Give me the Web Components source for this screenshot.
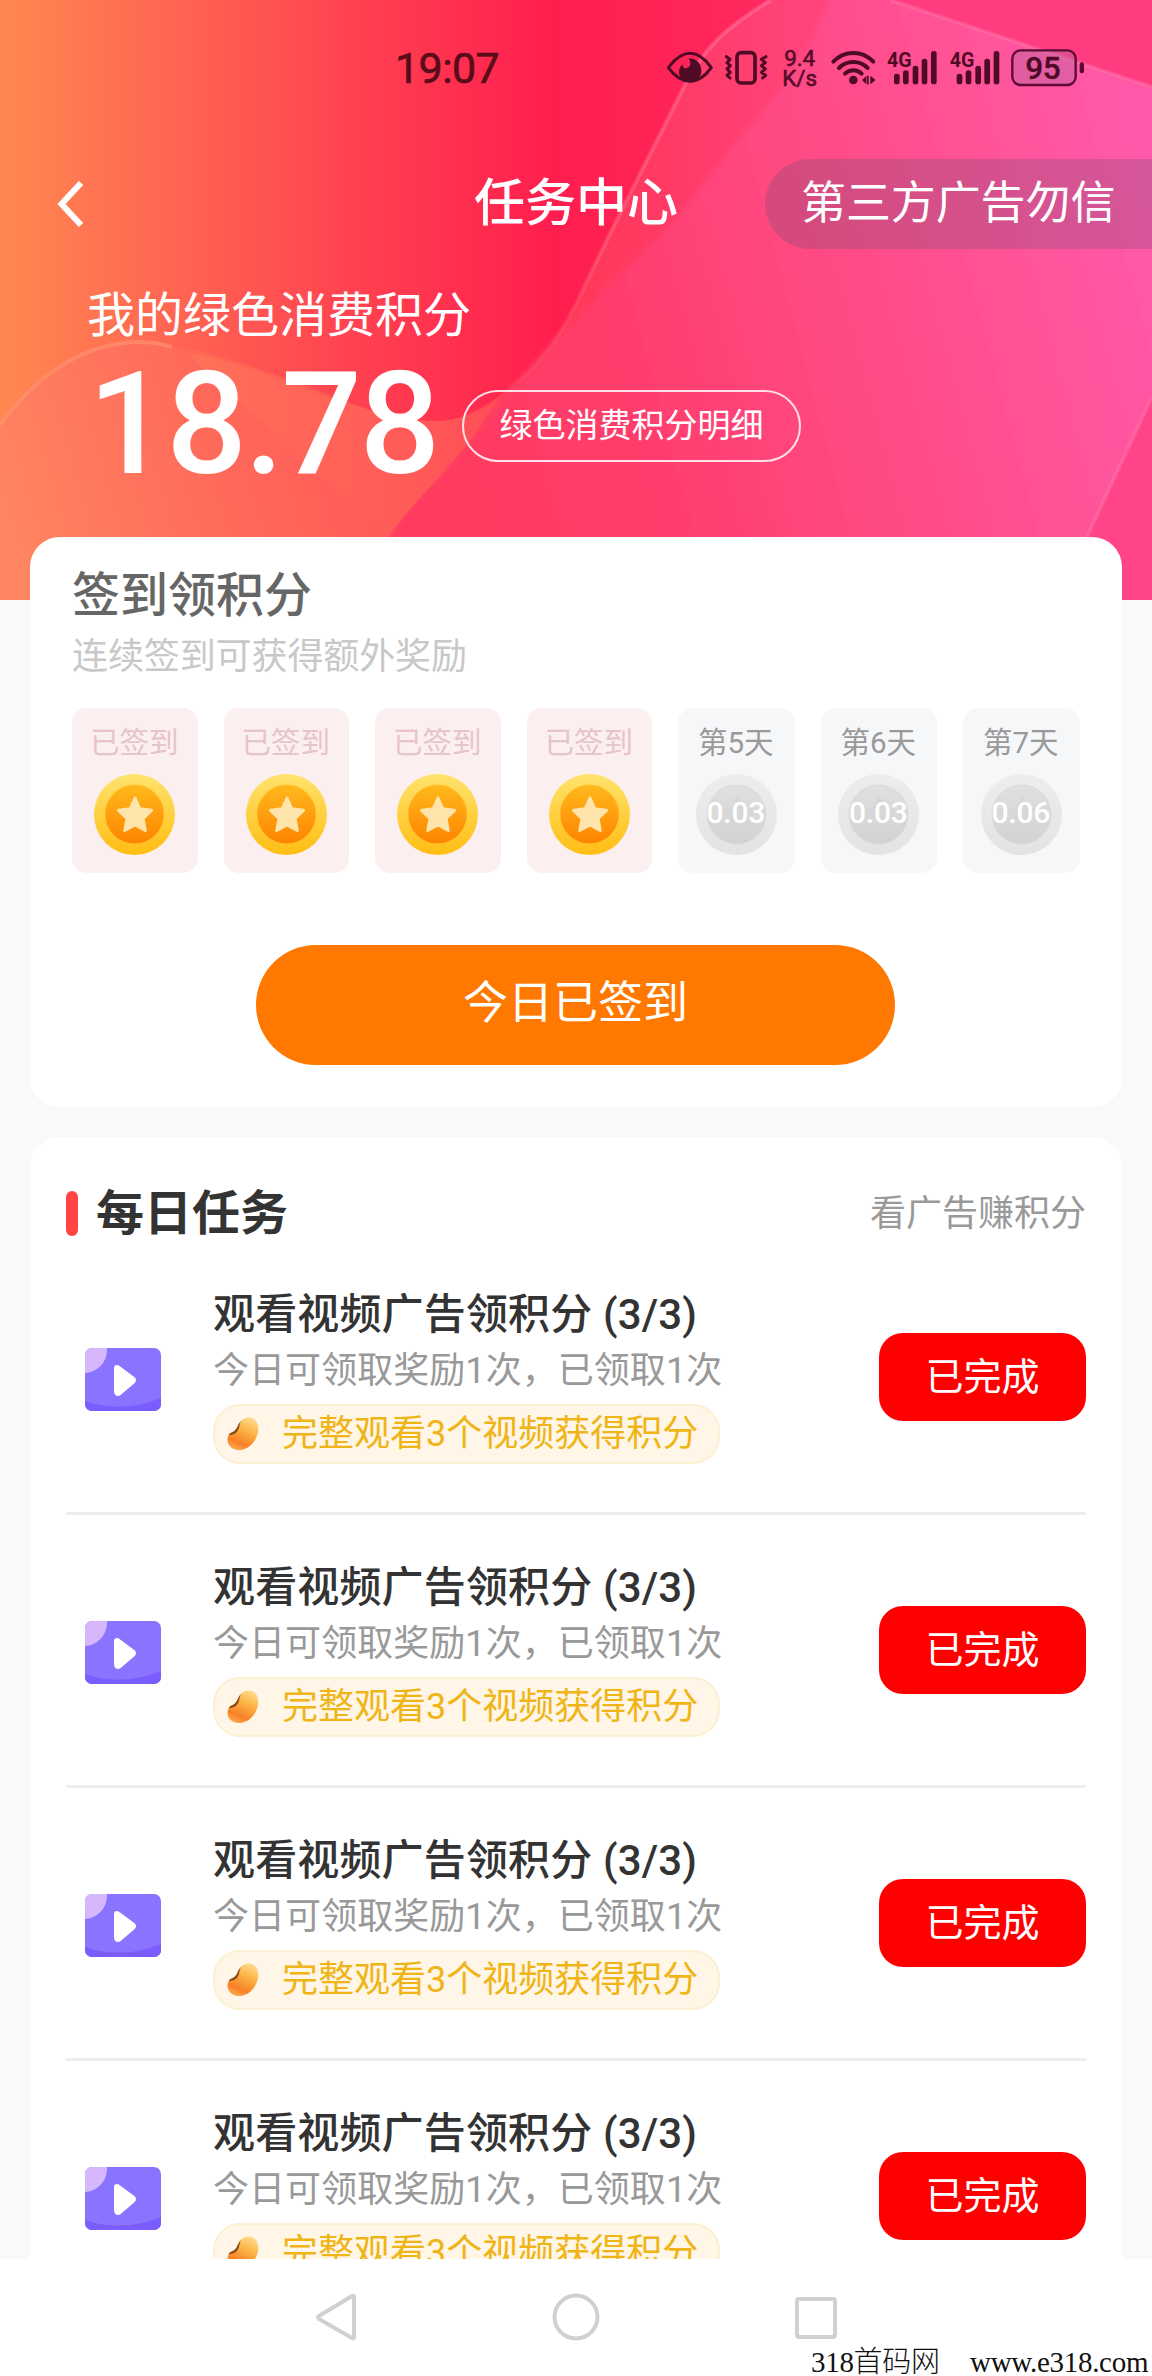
<!DOCTYPE html>
<html lang="zh-CN">
<head>
<meta charset="utf-8">
<title>任务中心</title>
<style>
html,body{margin:0;padding:0;background:#f9f9f9}
body{width:1152px;height:2376px;overflow:hidden;font-family:Roboto,"Noto Sans CJK SC",sans-serif}
</style>
</head>
<body>
<task-app></task-app>
<script>
const define = (name, html, render) => customElements.define(name, class extends HTMLElement {
  constructor(){ super(); this.attachShadow({mode:'open'}); }
  connectedCallback(){ this.shadowRoot.innerHTML = render ? render(this) : html; }
});

/* Phone status bar: clock and system indicators */
const signal = `<g fill="#4f0a25"><text x="741" y="110" font-size="63" font-weight="700" textLength="74" lengthAdjust="spacingAndGlyphs">4G</text>
<rect x="762" y="131" width="17" height="32" rx="8"/><rect x="789" y="121" width="17" height="42" rx="8"/><rect x="818" y="107" width="17" height="56" rx="8"/><rect x="845" y="86" width="17" height="77" rx="8"/><rect x="873" y="63" width="17" height="100" rx="8"/></g>`;
define('status-bar', `<style>
:host{display:flex;height:110px;padding:30px 0 0 395px;box-sizing:border-box;color:#5a0c1b}
time{width:265px;font-size:43px;line-height:76px;font-weight:400;letter-spacing:-.6px;-webkit-text-stroke:.7px}
svg{display:block;height:80px;flex:none;font-family:Roboto,sans-serif}
</style>
<time>19:07</time>
<svg width="60" viewBox="60 0 180 240"><path d="M85 113C105 86 126 70 150 70S195 86 214 113C195 140 174 154 150 154S105 140 85 113Z" fill="none" stroke="#4f0a25" stroke-width="9" stroke-linejoin="round"/><path d="M146 85C171 85 184 102 184 122C184 143 169 157 150 157C131 157 116 142 117 123C118 115 122 108 128 103C127 112 132 117 139 115C151 112 155 99 146 85Z" fill="#4f0a25"/></svg>
<svg width="53.33" viewBox="240 0 160 240"><rect x="291" y="68" width="54" height="91" rx="12" fill="none" stroke="#4f0a25" stroke-width="11"/><path d="M259 80L270 88L261 98L271 107L261 117L271 127L261 136L270 144M378 80L364 88L376 98L364 107L376 117L364 127L377 136L368 144" fill="none" stroke="#4f0a25" stroke-width="9" stroke-linejoin="round" stroke-linecap="round"/></svg>
<svg width="53.33" viewBox="400 0 160 240"><g fill="#5a0c2b" stroke="#5a0c2b" stroke-width="2" font-size="67" text-anchor="middle"><text x="480" y="107">9.4</text><text x="480" y="168">K/s</text></g></svg>
<svg width="53.33" viewBox="560 0 160 240"><g fill="none" stroke="#4f0a25" stroke-width="12" stroke-linecap="round"><path d="M579 95C612 60 666 60 699 95M596 114C620 90 658 90 682 114M614 131C628 117 650 117 664 131"/></g><circle cx="639" cy="150" r="13" fill="#4f0a25"/><path d="M665 150L677 139V162ZM679 137H685V163H679ZM690 137L706 150L690 163Z" fill="#4f0a25"/></svg>
<svg width="61.67" viewBox="720 0 185 240">${signal}</svg>
<svg width="63.33" viewBox="905 0 190 240"><g transform="translate(187 0)">${signal}</g></svg>
<svg width="81.67" viewBox="1095 0 245 240"><rect x="1117" y="61" width="190" height="104" rx="25" fill="#b76aa5" fill-opacity=".42" stroke="#5a0c35" stroke-width="7"/><rect x="1319" y="97" width="13" height="33" rx="6" fill="#5a0c35"/><text x="1209" y="147" text-anchor="middle" font-size="95" font-weight="500" textLength="106" fill="#4f0a25" stroke="#4f0a25">95</text></svg>`);

/* Decorative ribbon artwork behind the header */
define('wave-backdrop', `<style>:host{display:block;width:1152px;height:600px}svg{display:block}</style>
<svg width="1152" height="600" viewBox="0 0 1152 600">
<defs>
<linearGradient id="base" x1="0" x2="1"><stop offset="0" stop-color="#ff8850"/><stop offset=".16" stop-color="#ff6352"/><stop offset=".32" stop-color="#ff3f50"/><stop offset=".48" stop-color="#ff1e4e"/><stop offset=".62" stop-color="#ff265a"/><stop offset="1" stop-color="#ff4890"/></linearGradient>
<linearGradient id="pink" gradientUnits="userSpaceOnUse" x1="400" y1="430" x2="1152" y2="230"><stop offset="0" stop-color="#ff3a5e"/><stop offset=".3" stop-color="#ff3d6c"/><stop offset=".6" stop-color="#ff4b85"/><stop offset="1" stop-color="#ff59a8"/></linearGradient>
<linearGradient id="band" gradientUnits="userSpaceOnUse" x1="0" y1="0" x2="800" y2="0"><stop offset="0" stop-color="#ff8a52"/><stop offset=".25" stop-color="#ff6a52"/><stop offset=".5" stop-color="#ff5356"/><stop offset=".62" stop-color="#ff4258"/><stop offset=".72" stop-color="#ff3958"/><stop offset=".84" stop-color="#ff3a66"/><stop offset="1" stop-color="#ff447a"/></linearGradient>
<linearGradient id="hump" gradientUnits="userSpaceOnUse" x1="0" y1="500" x2="340" y2="400"><stop offset="0" stop-color="#ff8560"/><stop offset=".6" stop-color="#ff6a5a"/><stop offset="1" stop-color="#ff5c58"/></linearGradient>
<linearGradient id="low" gradientUnits="userSpaceOnUse" x1="200" y1="0" x2="560" y2="0"><stop offset="0" stop-color="#ff7058"/><stop offset=".6" stop-color="#ff5a58"/><stop offset="1" stop-color="#ff4258"/></linearGradient>
<linearGradient id="edge" gradientUnits="userSpaceOnUse" x1="0" y1="0" x2="0" y2="420"><stop offset="0" stop-color="#ff8ab0" stop-opacity=".4"/><stop offset=".6" stop-color="#ff7085" stop-opacity=".45"/><stop offset="1" stop-color="#ff6070" stop-opacity="0"/></linearGradient>
<filter id="soft" x="-5%" y="-5%" width="110%" height="110%"><feGaussianBlur stdDeviation="3"/></filter>
</defs>
<rect width="1152" height="600" fill="url(#base)"/>
<path d="M771 0C725 28 704 48 685 85C645 165 610 232 578 300C550 355 530 372 507 390C482 410 458 422 433 421C406 420 388 417 367 409C300 384 240 360 184 348L388 537V600H1152V0Z" fill="url(#band)"/>
<path filter="url(#soft)" d="M832 -10C818 35 801 60 779 91C748 130 720 160 690 200C665 232 645 250 618 275C570 325 515 380 478 430C440 480 410 500 388 540L340 610H1162V-10Z" fill="url(#pink)"/>
<path d="M169 350C230 355 300 392 367 409C390 418 412 421 433 421C458 422 482 412 500 396C490 412 484 420 478 430C440 480 410 505 388 537C330 490 250 425 169 350Z" fill="url(#low)"/>
<path d="M0 425C36 375 85 342 140 342C160 342 175 347 184 350C250 410 335 490 388 537L410 600H0Z" fill="url(#hump)"/>
<path d="M890 0L1152 87V0Z" fill="#ff3c80"/><path d="M1152 397L1087 537L1070 600H1152Z" fill="#ff4489"/>
<path d="M890 0L1152 87M1152 397C1128 448 1106 495 1087 537" fill="none" stroke="#ff7caa" stroke-opacity=".42" stroke-width="4"/>
<path d="M771 0C725 28 704 48 685 85C645 165 610 232 578 300C550 355 530 372 507 390" fill="none" stroke="url(#edge)" stroke-width="4"/>
<path d="M0 425C36 375 85 342 140 342C152 342 162 344 172 347" fill="none" stroke="#ff9573" stroke-opacity=".6" stroke-width="4"/>
</svg>`);

define('page-header', `<style>
:host{display:grid;width:1152px;height:600px;color:#fff}
wave-backdrop,.content{grid-area:1/1}
.content{display:flex;flex-direction:column;height:537px;min-width:0}
nav{display:flex;height:90px;margin-top:49px;align-items:center}
.back{width:474px;padding-left:56px;box-sizing:border-box}.back svg{display:block}
h1{font-size:51px;font-weight:500;line-height:82px;margin:0;width:291px;white-space:nowrap}
.notice{flex:1;height:90px;line-height:90px;border-radius:45px 0 0 45px;background:rgba(105,80,115,.28);padding-left:36px;box-sizing:border-box;font-size:45px;letter-spacing:-.1px;white-space:nowrap}
.label{font-size:48px;line-height:60px;margin:37px 0 0 87px}
.row{display:flex;align-items:center;height:130px;padding-left:88px;margin-top:14px}
.value{font-size:142px;line-height:130px;font-weight:500;letter-spacing:-2.500px;width:374px}
.detail{box-sizing:border-box;width:339px;height:72px;border:2px solid #ffe0e8;border-radius:36px;text-align:center;font-size:33px;line-height:67px;margin-top:1px;white-space:nowrap}
</style>
<wave-backdrop></wave-backdrop>
<div class="content"><status-bar></status-bar>
<nav><div class="back"><svg width="28" height="48" viewBox="0 0 28 48"><path d="M25 3L5.500 24L25 45" fill="none" stroke="#fff" stroke-width="6"/></svg></div><h1><slot name="title"></slot></h1><div class="notice"><slot name="notice"></slot></div></nav>
<div class="label"><slot name="label"></slot></div>
<div class="row"><div class="value"><slot name="value"></slot></div><div class="detail"><slot name="detail"></slot></div></div></div>`);

/* One day in the sign-in strip */
define('day-tile', '', el => {
  const done = el.hasAttribute('done');
  const c = done ? ['#ffe36e','#ffbd12','#ffb81c','#ff8400','#ffe5ab','#ffc02c'] : ['#ededed','#e3e3e3','#e0e0e0','#d2d2d2','#d7d7d7','#dadada'];
  return `<style>
:host{display:flex;flex-direction:column;align-items:center;box-sizing:border-box;flex:none;width:${done?125.5:116.5}px;height:165px;padding-top:15px;border-radius:15px;background:${done?'#fcefef':'#f5f7f9'};color:${done?'#e6c4c9':'#999'}}
.day{font-size:29.500px;line-height:41px;white-space:nowrap;margin-left:-1px}
.coin{display:grid;width:81px;height:81px;margin-top:10px;place-items:center}
.coin>*{grid-area:1/1}
.pts{color:#fff;font-size:30px;line-height:36px;font-weight:500;margin:0 1px 4px 0;z-index:1;letter-spacing:-.3px}
</style><div class="day"><slot></slot></div><div class="coin">
<svg width="81" height="81" viewBox="0 0 81 81"><defs><linearGradient id="o" x2="0" y2="1"><stop stop-color="${c[0]}"/><stop offset="1" stop-color="${c[1]}"/></linearGradient><linearGradient id="i" x2="0" y2="1"><stop stop-color="${c[2]}"/><stop offset="1" stop-color="${c[3]}"/></linearGradient></defs>
<circle cx="40.500" cy="40.500" r="40.500" fill="url(#o)"/><circle cx="40.500" cy="40.500" r="29.500" fill="url(#i)" stroke="${c[5]}" stroke-width="1"/>
<path d="M41 24L45.800 34.800L57.500 36.300L49 44.500L51.300 56.500L41 51L30.700 56.500L33 44.500L24.500 36.300L36.200 34.800Z" fill="${c[4]}" stroke="${c[4]}" stroke-width="3" stroke-linejoin="round"/></svg>
${done?'':`<span class="pts">${el.getAttribute('points')}</span>`}</div>`;
});

define('sign-card', `<style>
:host{display:flex;flex-direction:column;box-sizing:border-box;width:1092px;height:570px;padding:25px 42px 0;background:#fff;border-radius:30px;color:#666}
h2{margin:0;font-size:48px;line-height:68px;font-weight:500}
p{margin:3px 0 0;font-size:36px;line-height:48px;color:#c8c8c8;letter-spacing:-.1px}
.days{display:flex;gap:26px;margin-top:27px}
button{font:400 45px/117px Roboto,"Noto Sans CJK SC",sans-serif;color:#fff;background:#ff7800;border:0;border-radius:60px;width:639px;height:120px;margin:72px 0 0 184px;padding:0 0 3px}
</style><h2><slot name="title"></slot></h2><p><slot name="hint"></slot></p><div class="days"><slot></slot></div><button><slot name="action"></slot></button>`);

define('video-icon', `<style>:host{display:block}svg{display:block}</style><svg width="76" height="63" viewBox="0 0 76 63"><defs><clipPath id="c"><rect width="76" height="63" rx="7"/></clipPath></defs><g clip-path="url(#c)"><rect width="76" height="63" fill="#8973ff"/><circle cx="-1" cy="2" r="23" fill="#d5b7fb"/><path d="M0 53C22 61 50 61 76 50V63H0Z" fill="#7a5cff"/></g><path d="M32 20L47.500 31.500Q48.500 32 47.500 33L34 44.500Q32 46 32 43Z" fill="#fff" stroke="#fff" stroke-width="6" stroke-linejoin="round"/></svg>`);

define('gold-bean', `<style>:host{display:block}svg{display:block}</style><svg width="32" height="34" viewBox="0 0 32 34"><defs><linearGradient id="g" x1=".75" y1="0" x2=".35" y2="1"><stop stop-color="#ffdb90"/><stop offset=".4" stop-color="#fcb444"/><stop offset=".8" stop-color="#f88028"/><stop offset="1" stop-color="#fba348"/></linearGradient></defs><path d="M22 .5C29 .5 32 7 31 15C29 26 20 33 12 33C4 33-1 27 1 20C2 16 3 16 6 15C10 13 10 9 13 5C15 2 18 .5 22 .5Z" fill="url(#g)"/><path d="M14 4C10 8 11 12 6.500 14.500C4 16 3 16 2 18C7 18 10.500 15.500 12 11C12.500 8 13 6 14 4Z" fill="#8a4a1b"/></svg>`);

/* A task: icon, description, reward tag and state button */
define('task-row', `<style>
:host{display:flex;box-sizing:border-box;height:273px;border-bottom:3px solid #eee;padding-top:41px}
video-icon{margin:65px 52px 0 19px;flex:none}
.info{width:666px;flex:none;white-space:nowrap}
h3{margin:0;font-size:42px;line-height:64px;font-weight:500;color:#333;letter-spacing:.15px}
p{margin:0;font-size:36px;line-height:48px;color:#999;letter-spacing:.05px}
.tag{display:flex;align-items:center;box-sizing:border-box;width:507px;height:60px;margin-top:9px;border:2px solid #fcefd2;border-radius:27px;background:#fff6e7;color:#efb416;font-size:36px;line-height:54px;padding-left:12px}
.tag span{margin-left:23px;margin-bottom:1px}
button{font:400 38px/84px Roboto,"Noto Sans CJK SC",sans-serif;color:#fff;background:#f00;border:0;border-radius:24px;width:207px;height:88px;padding:0 0 1px;margin-top:50px;flex:none}
</style><video-icon></video-icon><div class="info"><h3><slot name="title"></slot></h3><p><slot name="note"></slot></p><div class="tag"><gold-bean></gold-bean><span><slot name="tag"></slot></span></div></div><button><slot name="state"></slot></button>`);

define('task-card', `<style>
:host{display:block;box-sizing:border-box;width:1092px;height:1122px;overflow:hidden;background:#fff;border-radius:30px 30px 0 0;padding:0 36px}
header{display:flex;align-items:center;height:57px;padding-top:48px}
i{width:12px;height:45px;border-radius:6px;background:#f44}
h2{flex:1;margin:0 0 0 18px;font-size:48px;line-height:57px;font-weight:700;color:#333}
span{font-size:36px;line-height:48px;color:#999}
</style><header><i></i><h2><slot name="title"></slot></h2><span><slot name="hint"></slot></span></header><slot></slot>`);

define('nav-bar', `<style>
:host{display:flex;flex-direction:column;height:117px;background:#fff}
.keys{display:flex;height:89px;padding:33px 0 0 314px;gap:192px;box-sizing:border-box}
svg{display:block;flex:none}
.mark{display:flex;justify-content:flex-end;height:28px;font:300 29px/28px "Liberation Serif","Noto Sans CJK SC",serif;color:#111;white-space:pre}
.name{width:159px;letter-spacing:-.3px}.url{width:182px;letter-spacing:-.3px}
</style><div class="keys">
<svg width="46" height="50" viewBox="0 0 46 50"><path d="M40 5V45Q40 47 38 46L5 27Q3 25 5 24L38 4Q40 3 40 5Z" fill="none" stroke="#d0d0d0" stroke-width="4" stroke-linejoin="round"/></svg>
<svg width="48" height="50" viewBox="0 0 48 50"><circle cx="24" cy="25" r="21.500" fill="none" stroke="#d0d0d0" stroke-width="4"/></svg>
<svg width="46" height="50" viewBox="0 0 46 50"><rect x="5" y="7" width="38" height="38" rx="2" fill="none" stroke="#d0d0d0" stroke-width="4"/></svg></div>
<div class="mark"><span class="name">318首码网</span><span class="url">www.e318.com</span></div>`);

const tasks = Array.from({length:4}, () => `<task-row><span slot="title">观看视频广告领积分 (3/3)</span><span slot="note">今日可领取奖励1次，已领取1次</span><span slot="tag">完整观看3个视频获得积分</span><span slot="state">已完成</span></task-row>`).join('');
define('task-app', `<style>
:host{display:flex;flex-direction:column;width:1152px;height:2376px;background:#f9f9f9}
page-header{flex:none}
main{display:flex;flex-direction:column;align-items:center;gap:30px;height:1722px;margin-top:-63px;z-index:1}
sign-card,task-card{flex:none}
nav-bar{flex:none}
</style>
<page-header><span slot="title">任务中心</span><span slot="notice">第三方广告勿信</span><span slot="label">我的绿色消费积分</span><span slot="value">18.78</span><span slot="detail">绿色消费积分明细</span></page-header>
<main>
<sign-card><span slot="title">签到领积分</span><span slot="hint">连续签到可获得额外奖励</span>
<day-tile done>已签到</day-tile><day-tile done>已签到</day-tile><day-tile done>已签到</day-tile><day-tile done>已签到</day-tile><day-tile points="0.03">第5天</day-tile><day-tile points="0.03">第6天</day-tile><day-tile points="0.06">第7天</day-tile>
<span slot="action">今日已签到</span></sign-card>
<task-card><span slot="title">每日任务</span><span slot="hint">看广告赚积分</span>${tasks}</task-card>
</main>
<nav-bar></nav-bar>`);
</script>
</body>
</html>
